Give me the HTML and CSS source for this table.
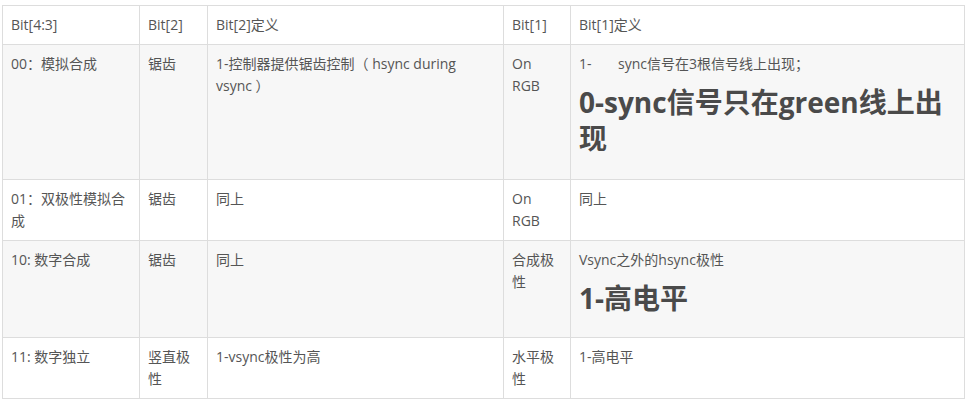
FILE: index.html
```html
<!DOCTYPE html>
<html lang="zh-CN">
<head>
<meta charset="utf-8">
<title>Bit table</title>
<link rel="stylesheet" href="styles.css">
</head>
<body>
<table class="grid">
  <colgroup>
    <col class="c1"><col class="c2"><col class="c3"><col class="c4"><col class="c5">
  </colgroup>
  <thead>
    <tr class="r-head">
      <th>Bit[4:3]</th>
      <th>Bit[2]</th>
      <th>Bit[2]定义</th>
      <th>Bit[1]</th>
      <th>Bit[1]定义</th>
    </tr>
  </thead>
  <tbody>
    <tr class="r1 stripe">
      <td>00：模拟合成</td>
      <td>锯齿</td>
      <td>1-控制器提供锯齿控制（ hsync during vsync ）</td>
      <td>On<br>RGB</td>
      <td><p class="line"><span class="num">1-</span>sync信号在3根信号线上出现；</p><h2 class="big">0-sync信号只在green线上出现</h2></td>
    </tr>
    <tr class="r2">
      <td>01：双极性模拟合成</td>
      <td>锯齿</td>
      <td>同上</td>
      <td>On<br>RGB</td>
      <td>同上</td>
    </tr>
    <tr class="r3 stripe">
      <td>10: 数字合成</td>
      <td>锯齿</td>
      <td>同上</td>
      <td>合成极性</td>
      <td><p class="line">Vsync之外的hsync极性</p><h2 class="big">1-高电平</h2></td>
    </tr>
    <tr class="r4">
      <td>11: 数字独立</td>
      <td>竖直极性</td>
      <td>1-vsync极性为高</td>
      <td>水平极性</td>
      <td>1-高电平</td>
    </tr>
  </tbody>
</table>
</body>
</html>
```
FILE: styles.css
```css
html, body {
  margin: 0;
  padding: 0;
  background: #ffffff;
}
body {
  padding: 5px 0 0 2px;
  font-family: "Open Sans", "Noto Sans CJK SC", sans-serif;
  font-size: 14px;
  line-height: 22px;
  color: #555555;
}
.grid {
  border-collapse: collapse;
  table-layout: fixed;
  width: 962px;
}
.c1 { width: 137px; }
.c2 { width: 68px; }
.c3 { width: 296px; }
.c4 { width: 67px; }
.c5 { width: 394px; }
.grid th,
.grid td {
  border: 1px solid #dddddd;
  padding: 8px 8px;
  text-align: left;
  vertical-align: top;
  font-weight: normal;
}
.r-head th { height: 22px; }
.stripe td { background: #f7f7f7; }
.r1 td { height: 118px; }
.r2 td { height: 43px; }
.r3 td { height: 80px; }
.r4 td { height: 44px; }
.line { margin: 0; }
.num {
  display: inline-block;
  width: 39px;
}
.big {
  margin: 9px 0 0;
  font-size: 28px;
  line-height: 36px;
  font-weight: bold;
  color: #4a4a4a;
}
```
